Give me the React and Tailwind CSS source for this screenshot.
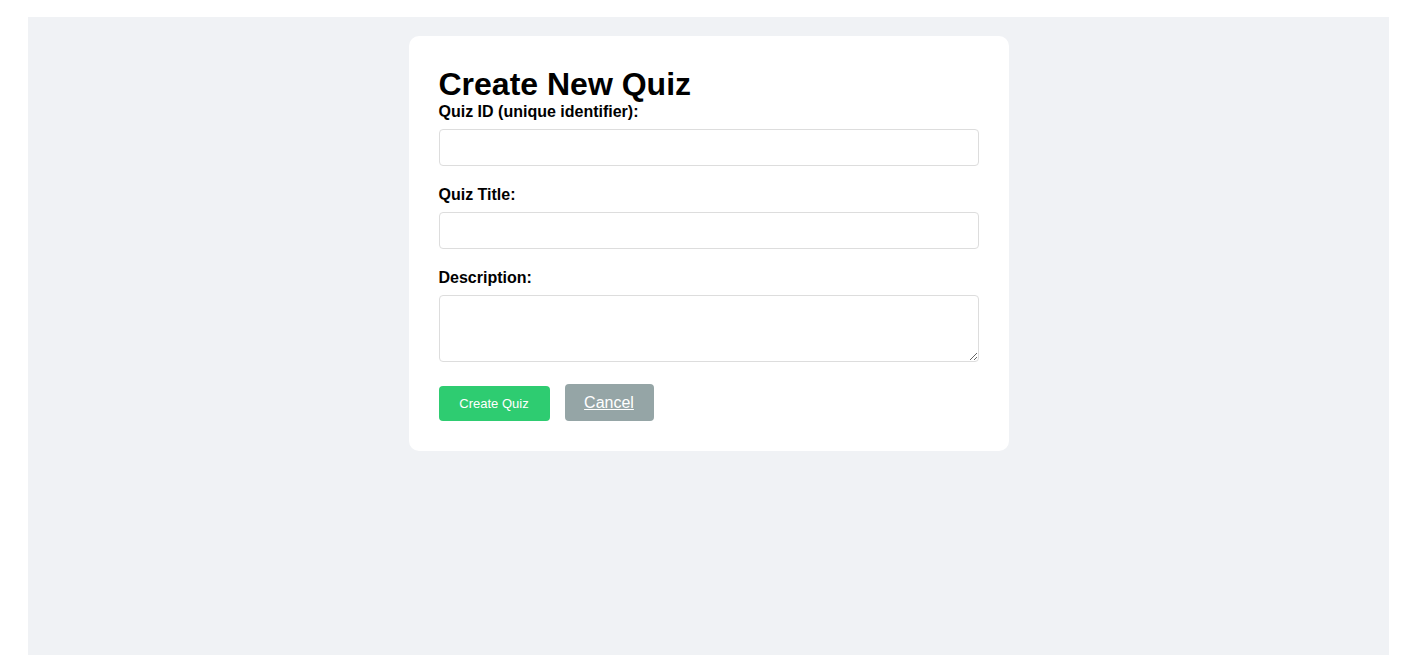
export default function App() {
  return (
    <div className="pl-[28px] pr-[27px] py-[17px] bg-white font-['Liberation_Sans',Arial,sans-serif] text-black">
      <div className="h-[638px] bg-[#f0f2f5] pt-[19px]">
        <div className="mx-auto w-[600px] rounded-[10px] bg-white p-[30px]">
          <h1 className="text-[32px] font-bold leading-[37px]">Create New Quiz</h1>
          <div className="mb-[20px]">
            <label className="mb-[8px] block text-[16px] font-bold leading-[18px]">Quiz ID (unique identifier):</label>
            <input type="text" className="block h-[37px] w-full rounded-[4px] border border-[#dddddd] px-[8px] text-[16px]" />
          </div>
          <div className="mb-[20px]">
            <label className="mb-[8px] block text-[16px] font-bold leading-[18px]">Quiz Title:</label>
            <input type="text" className="block h-[37px] w-full rounded-[4px] border border-[#dddddd] px-[8px] text-[16px]" />
          </div>
          <div className="mb-[20px]">
            <label className="mb-[8px] block text-[16px] font-bold leading-[18px]">Description:</label>
            <textarea className="block h-[67px] w-full rounded-[4px] border border-[#dddddd] p-[8px] text-[16px]" />
          </div>
          <div className="flex items-end gap-[15px] pt-[2px]">
            <button className="h-[35px] w-[111px] rounded-[4px] bg-[#2ecc71] text-[13px] text-white">Create Quiz</button>
            <a href="#" className="flex h-[37px] w-[89px] items-center justify-center rounded-[4px] bg-[#95a5a6] text-[16px] text-white underline">Cancel</a>
          </div>
        </div>
      </div>
    </div>
  );
}
